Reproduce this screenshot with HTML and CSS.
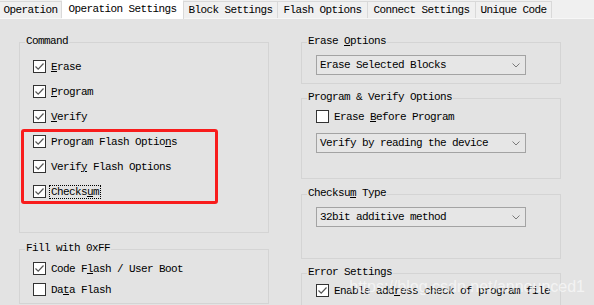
FILE: index.html
```html
<!DOCTYPE html>
<html>
<head>
<meta charset="utf-8">
<link rel="stylesheet" href="styles.css">
</head>
<body>
<div class="tabbar">
  <div class="tab t-op">Operation</div>
  <div class="tab tab-active t-opset">Operation Settings</div>
  <div class="tab t-block">Block Settings</div>
  <div class="tab t-flash">Flash Options</div>
  <div class="tab t-conn">Connect Settings</div>
  <div class="tab t-uniq">Unique Code</div>
</div>
<div class="main">
  <div class="col col-left">
    <div class="group g-cmd">
      <div class="group-title">Command</div>
      <div class="rows rows-cmd">
        <div class="row"><span class="cb"><svg viewBox="0 0 11 11" width="11" height="11"><polyline points="1.5,5.5 4.2,8.2 9.5,2.5" /></svg></span><span><u>E</u>rase</span></div>
        <div class="row"><span class="cb"><svg viewBox="0 0 11 11" width="11" height="11"><polyline points="1.5,5.5 4.2,8.2 9.5,2.5" /></svg></span><span><u>P</u>rogram</span></div>
        <div class="row"><span class="cb"><svg viewBox="0 0 11 11" width="11" height="11"><polyline points="1.5,5.5 4.2,8.2 9.5,2.5" /></svg></span><span><u>V</u>erify</span></div>
        <div class="highlight">
          <div class="row row-in"><span class="cb"><svg viewBox="0 0 11 11" width="11" height="11"><polyline points="1.5,5.5 4.2,8.2 9.5,2.5" /></svg></span><span>Program Flash Optio<u>n</u>s</span></div>
          <div class="row row-in"><span class="cb"><svg viewBox="0 0 11 11" width="11" height="11"><polyline points="1.5,5.5 4.2,8.2 9.5,2.5" /></svg></span><span>Verif<u>y</u> Flash Options</span></div>
          <div class="row row-in"><span class="cb"><svg viewBox="0 0 11 11" width="11" height="11"><polyline points="1.5,5.5 4.2,8.2 9.5,2.5" /></svg></span><span class="focus">Checks<u>u</u>m</span></div>
        </div>
      </div>
    </div>
    <div class="group g-fill">
      <div class="group-title">Fill with 0xFF</div>
      <div class="rows rows-fill">
        <div class="row row-fill"><span class="cb"><svg viewBox="0 0 11 11" width="11" height="11"><polyline points="1.5,5.5 4.2,8.2 9.5,2.5" /></svg></span><span>Code F<u>l</u>ash / User Boot</span></div>
        <div class="row row-fill"><span class="cb"></span><span>Da<u>t</u>a Flash</span></div>
      </div>
    </div>
  </div>
  <div class="col col-right">
    <div class="group g-erase">
      <div class="group-title">Erase <u>O</u>ptions</div>
      <div class="combo c-erase"><span>Erase Selected Blocks</span><svg class="chev" viewBox="0 0 8 5" width="8" height="5"><polyline points="0.5,0.5 4,4 7.5,0.5" /></svg></div>
    </div>
    <div class="group g-pv">
      <div class="group-title">Program &amp; Verify Options</div>
      <div class="row row-single r-ebp"><span class="cb"></span><span>Erase <u>B</u>efore Program</span></div>
      <div class="combo c-verify"><span>Verify by reading the device</span><svg class="chev" viewBox="0 0 8 5" width="8" height="5"><polyline points="0.5,0.5 4,4 7.5,0.5" /></svg></div>
    </div>
    <div class="group g-sum">
      <div class="group-title">Checksu<u>m</u> Type</div>
      <div class="combo c-sum"><span>32bit additive method</span><svg class="chev" viewBox="0 0 8 5" width="8" height="5"><polyline points="0.5,0.5 4,4 7.5,0.5" /></svg></div>
    </div>
    <div class="group g-err">
      <div class="group-title">Error Settings</div>
      <div class="row row-single r-err"><span class="cb"><svg viewBox="0 0 11 11" width="11" height="11"><polyline points="1.5,5.5 4.2,8.2 9.5,2.5" /></svg></span><span>Enable add<u>r</u>ess check of program file</span></div>
    </div>
  </div>
</div>
<div class="watermark">https://blog.csdn.net/announced1</div>
</body>
</html>
```
FILE: styles.css
```css
html, body {
  margin: 0;
  padding: 0;
}
body {
  width: 594px;
  height: 305px;
  overflow: hidden;
  background: #e3e3e3;
  font-family: "Liberation Mono", "DejaVu Sans Mono", monospace;
  font-size: 11px;
  letter-spacing: -0.6px;
  color: #000;
  position: relative;
}
u {
  text-decoration: underline;
  text-underline-offset: 1px;
}

/* tabs */
.tabbar {
  display: flex;
  align-items: flex-start;
  height: 18px;
  background: #f0f0f0;
  border-bottom: 1px solid #f7f7f7;
}
.tab {
  box-sizing: border-box;
  height: 17px;
  margin-top: 1px;
  border-top: 1px solid #d9d9d9;
  border-right: 1px solid #d9d9d9;
  background: #f0f0f0;
  display: flex;
  align-items: center;
  justify-content: center;
  white-space: nowrap;
  line-height: 16px;
}
.tab-active {
  height: 19px;
  margin-top: 0;
  background: #fff;
  border-top: 1px solid #fff;
  align-items: flex-start;
  line-height: 16px;
}
.t-op { width: 62px; }
.t-opset { width: 122px; }
.t-block { width: 94px; }
.t-flash { width: 90px; }
.t-conn { width: 108px; }
.t-uniq { width: 76px; }

/* layout */
.main {
  display: grid;
  grid-template-columns: 250px 260px;
  column-gap: 32px;
  padding-left: 19px;
}
.col {
  display: flex;
  flex-direction: column;
}
.col-left { padding-top: 23px; }
.col-right { padding-top: 23px; }

/* group boxes */
.group {
  border: 1px solid #d4d4d4;
}
.group-title {
  width: max-content;
  margin: -8px 0 0 5px;
  padding: 0 1px;
  height: 12px;
  line-height: 12px;
  background: #e3e3e3;
  white-space: nowrap;
}
.g-cmd { padding-bottom: 28px; }
.rows-cmd { padding-top: 7px; }
.g-fill { margin-top: 16px; padding-bottom: 3px; }
.rows-fill { padding-top: 4px; }

.g-erase { padding-bottom: 8px; }
.g-pv { margin-top: 14px; padding-bottom: 25px; }
.g-sum { margin-top: 15px; padding-bottom: 31px; }
.g-err { margin-top: 14px; padding-bottom: 20px; }

/* rows */
.row {
  display: flex;
  align-items: center;
  height: 25px;
  padding-left: 13px;
  white-space: nowrap;
}
.row-in { padding-left: 12px; }
.row-fill { height: 21px; }
.row-single {
  height: 13px;
  padding-left: 14px;
}
.r-ebp { margin-top: 7px; }
.r-err { margin-top: 6px; }

.highlight {
  margin-left: 1px;
  width: 197px;
  outline: 3px solid #f81c1c;
  outline-offset: -3px;
  border-radius: 3px;
}

.cb {
  box-sizing: border-box;
  width: 13px;
  height: 13px;
  border: 1px solid #333;
  background: #fff;
  margin-right: 5px;
  flex: none;
  display: flex;
}
.cb svg {
  display: block;
}
.cb polyline {
  fill: none;
  stroke: #555;
  stroke-width: 1.2;
}
.focus {
  outline: 1px dotted #000;
  outline-offset: 0;
  padding: 0 1px;
  margin-left: -1px;
}

/* combo */
.combo {
  box-sizing: border-box;
  width: 210px;
  height: 20px;
  margin-left: 14px;
  border: 1px solid #a3a3a3;
  background: #e6e6e6;
  display: flex;
  align-items: center;
  justify-content: space-between;
  padding: 0 5px 0 3px;
  white-space: nowrap;
}
.c-erase { margin-top: 8px; }
.c-verify { margin-top: 10px; }
.c-sum { margin-top: 8px; }
.chev polyline {
  fill: none;
  stroke: #7a7a7a;
  stroke-width: 1;
}

/* watermark overlay */
.watermark {
  position: absolute;
  right: 9px;
  top: 279px;
  font-family: "Liberation Sans", Arial, sans-serif;
  font-size: 16px;
  line-height: 16px;
  letter-spacing: 0;
  color: rgba(255, 255, 255, 0.6);
  white-space: nowrap;
}
```
